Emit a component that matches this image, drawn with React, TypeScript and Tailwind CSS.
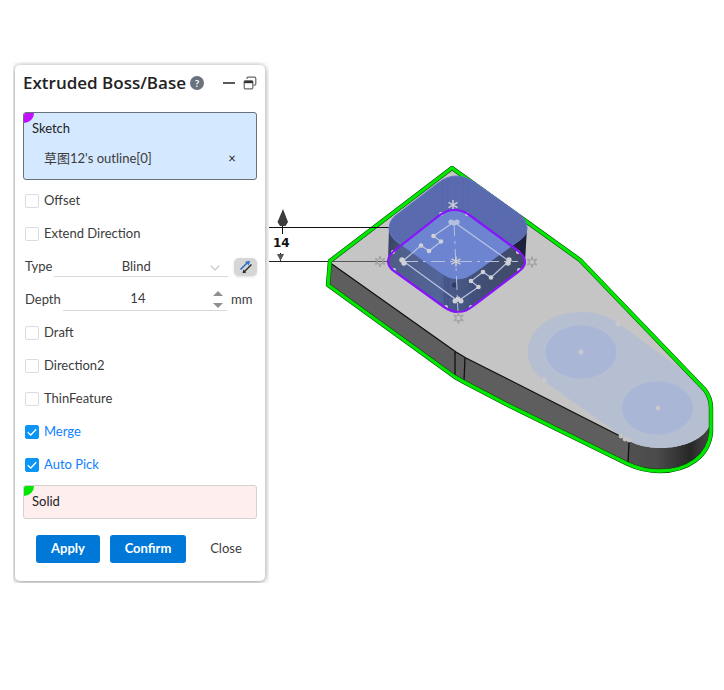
import { useState } from 'react';
import type { ReactNode } from 'react';

const BLOCK_TOP =
  'M395 216 L438 183 Q447 176 456 176 Q466 176 474 182 L519 214 Q527 220 527 228 Q527 235 520 240 L474 273 Q466 279 458 279 Q449 279 441 273 L396 241 Q389 235 389 228 Q389 221 395 216Z';
const PROFILE =
  'M394 251 L440 215 Q447 210 454 210 Q462 210 468 214 L517 250 Q525 256 525 262 Q525 267 518 272 L473 306 Q466 312 459 312 Q451 312 444 307 L394 271 Q388 267 388 261 Q388 256 394 251Z';
const TOP_FACE =
  'M329 262 L452 168 L580 260 L705 390 Q711 398 711 408 L711 422 C706 440 682 448 660 448 Q642 448 629 441 L622 437 L510 381 L466 358 L456 352Z';
const SILHOUETTE =
  'M330 261 L452 168 L580 260 L705 390 Q711 398 711 408 L711 432 C709 456 688 471 660 471 Q643 471 628 464 L510 406 L464 382 L455 377 L328 285Z';

function CheckRow({ label, defaultChecked = false }: { label: string; defaultChecked?: boolean }) {
  const [checked, setChecked] = useState(defaultChecked);
  return (
    <label className={`flex h-[33px] items-center gap-[5px] pl-0.5 ${checked ? 'text-[#1080ff]' : ''}`}>
      <span className="relative flex">
        <input
          type="checkbox"
          checked={checked}
          onChange={e => setChecked(e.target.checked)}
          className="h-3.5 w-3.5 appearance-none rounded-xs border border-[#d9dce3] bg-white checked:border-[#0a95f7] checked:bg-[#0a95f7]"
        />
        {checked && (
          <svg viewBox="0 0 14 14" className="pointer-events-none absolute inset-0 h-3.5 w-3.5" fill="none" stroke="#fff" strokeWidth="1.3" aria-hidden="true">
            <path d="M2.7 7.2 L5.8 10 L11.2 4.2" />
          </svg>
        )}
      </span>
      {label}
    </label>
  );
}

function PickBox({ title, tone, corner, children }: { title: string; tone: string; corner: string; children?: ReactNode }) {
  return (
    <section className={`relative overflow-hidden rounded-[3px] border px-2 text-[#222] ${tone}`}>
      <span className={`absolute top-0 left-0 h-2.5 w-2.5 rounded-br-full ${corner}`} />
      <h2 className="flex h-8 items-center">{title}</h2>
      {children}
    </section>
  );
}

function Star({ x, y }: { x: number; y: number }) {
  return (
    <path
      d="M0 -5 V5 M-4.5 -2.7 L4.5 2.7 M-4.5 2.7 L4.5 -2.7"
      transform={`translate(${x} ${y})`}
      stroke="#cbcdd2"
      strokeWidth="1.5"
    />
  );
}

function Gear({ x, y }: { x: number; y: number }) {
  return (
    <g transform={`translate(${x} ${y})`} stroke="#a3a3a3" fill="none">
      <circle r="2.8" strokeWidth="1.2" />
      <path d="M0 -3 V-5.5 M0 3 V5.5 M-2.6 -1.5 L-4.8 -2.8 M2.6 1.5 L4.8 2.8 M-2.6 1.5 L-4.8 2.8 M2.6 -1.5 L4.8 -2.8" strokeWidth="2" />
    </g>
  );
}

function Dots({ points, r, fill = '#cfd1d7' }: { points: number[][]; r: number; fill?: string }) {
  return (
    <g fill={fill}>
      {points.map(([x, y]) => (
        <circle key={`${x}-${y}`} cx={x} cy={y} r={r} />
      ))}
    </g>
  );
}

function ModelView() {
  return (
    <svg viewBox="269 0 455 690" className="block h-auto w-full" role="img" aria-label="Extrusion preview">
      <defs>
        <linearGradient id="tip" x1="628" x2="711" y1="0" y2="0" gradientUnits="userSpaceOnUse">
          <stop offset="0" stopColor="#505050" />
          <stop offset="0.35" stopColor="#4b4b4b" />
          <stop offset="0.75" stopColor="#272727" />
          <stop offset="1" stopColor="#4a4a4a" />
        </linearGradient>
        <linearGradient id="wall" x1="389" x2="527" y1="0" y2="0" gradientUnits="userSpaceOnUse">
          <stop offset="0" stopColor="#3b4363" />
          <stop offset="0.06" stopColor="#414c70" />
          <stop offset="0.4" stopColor="#4d5f91" />
          <stop offset="0.65" stopColor="#343f63" />
          <stop offset="0.9" stopColor="#20253f" />
          <stop offset="1" stopColor="#1b1f36" />
        </linearGradient>
        <linearGradient id="floor" x1="388" x2="525" y1="0" y2="0" gradientUnits="userSpaceOnUse">
          <stop offset="0" stopColor="#4f5d86" />
          <stop offset="0.38" stopColor="#526599" />
          <stop offset="0.43" stopColor="#4a5b8c" />
          <stop offset="0.58" stopColor="#46557f" />
          <stop offset="0.7" stopColor="#414d73" />
          <stop offset="1" stopColor="#414a66" />
        </linearGradient>
        <clipPath id="faceClip"><path d={TOP_FACE} /></clipPath>
        <clipPath id="profileClip"><path d={PROFILE} /></clipPath>
      </defs>

      <path d={SILHOUETTE} fill="#5e5e5e" />
      <path d="M628 441 L711 415 V432 C709 456 688 471 660 471 Q643 471 628 464Z" fill="url(#tip)" />
      <path d={TOP_FACE} fill="#c5c5c5" />
      <g clipPath="url(#faceClip)">
        <path d="M618 323 L695 379 A53 40 0 1 1 621 436 L544 381 A53 40 0 1 1 618 323Z" fill="#b6bfd1" />
        <ellipse cx="581" cy="352" rx="35.5" ry="26.5" fill="#aab6d6" />
        <ellipse cx="657.5" cy="408" rx="35.5" ry="26.5" fill="#aab6d6" />
      </g>
      <path d="M329 262 L456 352 L466 358 L622 437 M455 352 V377 M465 358 L464 381 M629 442 L628 463" fill="none" stroke="#111" strokeWidth="1.3" />
      <Dots points={[[581, 352], [658, 408], [618, 324], [544, 380]]} r={2.5} fill="#c8c9cc" />
      <Dots points={[[621, 436], [629, 440], [625, 439]]} r={2.4} fill="#c4c4c4" />

      {/* silhouette highlight */}
      <path d={SILHOUETTE} fill="none" stroke="#0a4a0a" strokeWidth="4.4" strokeLinejoin="round" />
      <path d={SILHOUETTE} fill="none" stroke="#00e800" strokeWidth="3.3" strokeLinejoin="round" />

      {/* dimension lines */}
      <path d="M269 227.5 H389 M282.5 219 V234 M280.5 253 V261" stroke="#111" strokeWidth="1" />
      <path d="M269 261.5 H328" stroke="#222" strokeWidth="1" />
      <path d="M332 261.5 H388" stroke="#555" strokeWidth="1" />
      <path d="M283 209 L288 222 L285.5 226 H280 L277.5 222Z" fill="#3d3d3d" />
      <path d="M277 254 H284 L280.5 261Z" fill="#555" />
      <text x="273" y="247" fill="#111" className="font-['DejaVu_Sans'] text-[12px] font-bold">14</text>

      {/* extruded block */}
      <path d="M389 228 H527 L525 262 Q525 267 518 272 L473 306 Q466 312 459 312 Q451 312 444 307 L394 271 Q388 267 388 261Z" fill="url(#wall)" />
      <path d={PROFILE} fill="url(#floor)" />
      <path d={BLOCK_TOP} fill="#5a6aae" stroke="#6076c8" strokeWidth="1" />
      <path d="M443 181 V209 M448 179 V209 M463 178 V210 M469 180 V212" stroke="#5767a9" strokeWidth="1" />
      <g clipPath="url(#profileClip)">
        <path d={BLOCK_TOP} fill="#6d85d1" />
      </g>
      <path d="M445 276 V306 M448 278 V308 M470 277 V307 M473 275 V305" stroke="#3d4f80" strokeWidth="1" />
      <circle cx="454.5" cy="285" r="2.6" fill="#2d3b68" />

      {/* sketch profile */}
      <path d="M404 261.5 H518" stroke="#b6c0dc" strokeWidth="1" strokeDasharray="14 5 3 5" />
      <path d="M454 222 L458 312" stroke="#b6c0dc" strokeWidth="1" strokeDasharray="14 5 3 5" />
      <path
        d="M403 261 L421 245.5 L429 251 L441 241.5 L433.5 236 L454 222 L509 261 L491 277.5 L483 272 L471 281 L478.5 287 L458 301Z"
        fill="none"
        stroke="#bdc8e3"
        strokeWidth="1.1"
      />
      <Dots points={[[421, 245.5], [429, 251], [441, 241.5], [433.5, 236], [491, 277.5], [483, 272], [471, 281], [478.5, 287]]} r={2.3} />
      <Dots points={[[402, 260], [404, 263], [509, 260], [508, 263]]} r={2.7} />
      <Dots points={[[451, 222], [457, 222], [454, 223]]} r={2.6} fill="#b4c0e2" />
      <Dots points={[[455, 301], [461, 301], [458, 299]]} r={2.5} />
      <Dots points={[[441, 214], [467, 214], [393, 252], [518, 252], [394, 270], [519, 270], [446, 307], [471, 307]]} r={2} />
      <Star x={453} y={205} />
      <Star x={456} y={261.5} />
      <path d={PROFILE} fill="none" stroke="#8615fb" strokeWidth="2.2" />
      <Gear x={380} y={261.5} />
      <Gear x={532} y={262} />
      <Gear x={458.5} y={318} />
    </svg>
  );
}

export default function App() {
  const [depth, setDepth] = useState(14);

  return (
    <main className="flex min-h-screen items-start bg-white font-['Lato','Noto_Sans_CJK_SC',sans-serif] text-[13px] text-[#3c3c3c]">
      <div className="mt-[62px] ml-[13px] w-64 shrink-0 overflow-hidden pt-[3px] pr-1 pb-0.5 pl-0.5">
        <form
          className="rounded-[5px] bg-white px-2 pb-[18px] shadow-[0_1px_6px_rgba(0,0,0,0.45)]"
          onSubmit={e => e.preventDefault()}
        >
          <header className="flex h-9 items-center">
            <h1 className="font-['Open_Sans',sans-serif] text-[17px] font-semibold whitespace-nowrap text-[#222]">Extruded Boss/Base</h1>
            <button type="button" aria-label="Help" className="ml-1 flex h-3.5 w-3.5 shrink-0 items-center justify-center rounded-full bg-[#69727e] text-[10px] font-bold text-white">
              ?
            </button>
            <button type="button" aria-label="Minimize" className="ml-auto flex h-4 w-4 items-center justify-center">
              <span className="h-0.5 w-3 bg-[#5a5a5a]" />
            </button>
            <button type="button" aria-label="Float panel" className="ml-1.5">
              <svg viewBox="0 0 14 14" className="h-3.5 w-3.5" fill="none" stroke="#666" strokeWidth="1.2" aria-hidden="true">
                <path d="M4 3 V2.2 Q4 1.2 5 1.2 H11.5 Q12.8 1.2 12.8 2.5 V8 Q12.8 9.2 11.5 9.2 H10.5" />
                <rect x="1.2" y="4.8" width="8.6" height="8" rx="1" />
                <path d="M1.2 6 H9.8" stroke="#333" strokeWidth="2.4" />
              </svg>
            </button>
          </header>

          <div className="mt-[11px]">
            <PickBox title="Sketch" tone="border-[#687078] bg-[#d4e8ff]" corner="bg-[#c010ff]">
              <div className="flex h-[34px] items-start justify-between pt-1 pr-2 pl-3">
                <span className="text-[#3c3c3c]">草图12's outline[0]</span>
                <button type="button" aria-label="Remove selection" className="w-4">×</button>
              </div>
            </PickBox>
          </div>

          <div className="mt-1">
            <CheckRow label="Offset" />
            <CheckRow label="Extend Direction" />
            <div className="flex h-[33px] items-center pl-0.5">
              <label htmlFor="type">Type</label>
              <div className="relative ml-0.5 flex-1">
                <select id="type" className="h-5 w-full appearance-none border-b border-[#d8d8d8] bg-transparent pr-2.5 text-center">
                  <option>Blind</option>
                  <option>Through All</option>
                </select>
                <svg viewBox="0 0 10 6" className="pointer-events-none absolute top-2 right-2 h-1.5 w-2.5" fill="none" stroke="#bfc3c8" strokeWidth="1.2" aria-hidden="true">
                  <path d="M0.6 0.6 L5 5 L9.4 0.6" />
                </svg>
              </div>
              <button type="button" aria-label="Reverse direction" className="ml-1.5 flex h-[18px] w-[23px] items-center justify-center rounded-[5px] bg-[#d6d6d6] shadow-sm">
                <svg viewBox="0 0 14 14" className="h-3.5 w-3.5" fill="none" aria-hidden="true">
                  <path d="M1.5 9.5 L8 3" stroke="#2f74cc" strokeWidth="1.7" />
                  <path d="M11 0.8 L10 5.4 L6 1.8Z" fill="#2f74cc" />
                  <path d="M12.5 4.5 L6 11" stroke="#222" strokeWidth="1.3" />
                  <path d="M3.5 13.2 L4.5 9.6 L7.4 12.4Z" fill="#222" />
                </svg>
              </button>
            </div>
            <div className="flex h-[33px] items-center pl-0.5">
              <label htmlFor="depth">Depth</label>
              <div className="ml-0.5 flex h-[23px] flex-1 items-center border-b border-[#d8d8d8]">
                <input
                  id="depth"
                  inputMode="decimal"
                  value={depth}
                  onChange={e => setDepth(Number(e.target.value) || 0)}
                  className="w-full min-w-0 bg-transparent text-center outline-none"
                />
                <div className="mr-1 flex flex-col gap-[7px]">
                  <button type="button" aria-label="Increase depth" onClick={() => setDepth(d => d + 1)}>
                    <svg viewBox="0 0 10 5" className="h-[5px] w-2.5" fill="#8f8f8f"><path d="M5 0 L10 5 H0Z" /></svg>
                  </button>
                  <button type="button" aria-label="Decrease depth" onClick={() => setDepth(d => d - 1)}>
                    <svg viewBox="0 0 10 5" className="h-[5px] w-2.5" fill="#8f8f8f"><path d="M0 0 H10 L5 5Z" /></svg>
                  </button>
                </div>
              </div>
              <span className="ml-1 w-[26px]">mm</span>
            </div>
            <CheckRow label="Draft" />
            <CheckRow label="Direction2" />
            <CheckRow label="ThinFeature" />
            <CheckRow label="Merge" defaultChecked />
            <CheckRow label="Auto Pick" defaultChecked />
          </div>

          <div className="mt-1">
            <PickBox title="Solid" tone="border-[#d8cfcf] bg-[#ffeeee]" corner="bg-[#00e800]" />
          </div>

          <footer className="mt-4 flex gap-2.5 pl-[13px]">
            <button type="submit" className="h-7 w-16 rounded-[3px] bg-[#0078d8] font-bold text-white">Apply</button>
            <button type="button" className="h-7 w-[76px] rounded-[3px] bg-[#0078d8] font-bold text-white">Confirm</button>
            <button type="button" className="h-7 w-[60px]">Close</button>
          </footer>
        </form>
      </div>
      <div className="min-w-0 flex-1">
        <ModelView />
      </div>
    </main>
  );
}
